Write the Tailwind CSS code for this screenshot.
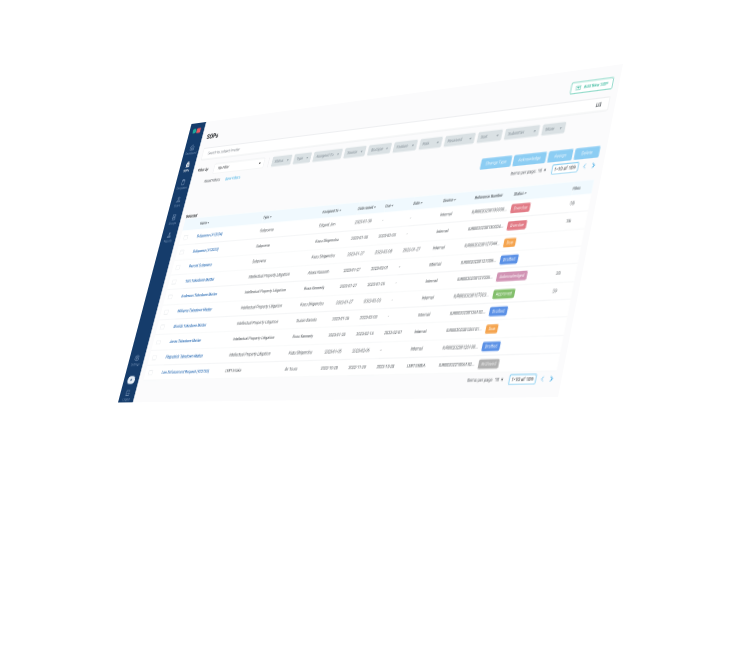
<!DOCTYPE html>
<html lang="en">
<head>
<meta charset="utf-8">
<title>SOPs</title>
<script src="https://cdn.jsdelivr.net/npm/@tailwindcss/browser@4"></script>
</head>
<body class="bg-white">
<div class="relative min-h-screen overflow-hidden font-[Roboto,'Liberation_Sans',sans-serif]">
  <!-- Board tilted in perspective; the inner layer holds the full-size interface -->
  <div class="absolute top-0 left-0 h-[273px] w-[504px] origin-top-left [transform:matrix3d(0.652957,-0.139921,0,-0.00032615,-0.288077,0.955861,0,-0.00015971,0,0,1,0,191.5,124,0,1)]">
  <div class="flex h-[780px] w-[1440px] origin-top-left scale-35 bg-[#fbfbfc] text-[11px] leading-4 text-[#40464b]">
    <nav class="flex w-[58px] shrink-0 flex-col items-center bg-[#153c6b] pt-[15px] pb-[3px] text-[9px] leading-[10px] text-[#7f9abd]">
      <svg class="mb-[30px] h-4 w-8" viewBox="0 0 32 16"><rect x="0" y="1" width="14" height="14" rx="6" fill="#1fa79b"/><rect x="16" y="0" width="15" height="15" rx="3" fill="#ea5a62"/></svg>
      <div class="flex flex-col gap-[18px]">
        <a href="#" class="flex flex-col items-center gap-0.5"><svg class="size-5" viewBox="0 0 24 24" fill="none" stroke="currentColor" stroke-width="2"><path d="M4 11l8-7 8 7v9H4zM9 20v-6h6v6"/></svg>Dashboard</a>
        <a href="#" class="flex flex-col items-center gap-0.5 font-bold text-white"><svg class="size-5" viewBox="0 0 24 24" fill="none" stroke="currentColor" stroke-width="3"><path d="M6 10h12v10H6zM9 10V4h6v6M9 15h6"/></svg>SOPs</a>
        <a href="#" class="flex flex-col items-center gap-0.5"><svg class="size-5" viewBox="0 0 24 24" fill="none" stroke="currentColor" stroke-width="2"><path d="M6 6h12v14H6zM9 6V3h6v3"/></svg>Templates</a>
        <a href="#" class="flex flex-col items-center gap-0.5"><svg class="size-5" viewBox="0 0 24 24" fill="none" stroke="currentColor" stroke-width="2"><circle cx="12" cy="8" r="4"/><path d="M4 20c1-8 15-8 16 0z"/></svg>Users</a>
        <a href="#" class="flex flex-col items-center gap-0.5"><svg class="size-5" viewBox="0 0 24 24" fill="none" stroke="currentColor" stroke-width="2"><path d="M6 4h12v6H6zM6 14h12v6H6zM12 10v4"/></svg>Groups</a>
        <a href="#" class="flex flex-col items-center gap-0.5"><svg class="size-5" viewBox="0 0 24 24" fill="none" stroke="currentColor" stroke-width="2"><circle cx="12" cy="8" r="3"/><path d="M5 19c2-7 12-7 14 0z"/></svg>Reports</a>
      </div>
      <div class="mt-auto flex flex-col items-center gap-[14px]">
        <a href="#" class="mb-3 flex flex-col items-center gap-0.5"><svg class="size-5" viewBox="0 0 24 24" fill="none" stroke="currentColor" stroke-width="2"><path d="M12 3l8 4v10l-8 4-8-4V7z"/><circle cx="12" cy="12" r="3"/></svg>Settings</a>
        <button aria-label="Account" class="h-[22px] w-7 rounded-full bg-[#e4ecf5] font-bold text-[#153c6b]">H</button>
        <a href="#" class="flex flex-col items-center gap-0.5"><svg class="size-5" viewBox="0 0 24 24" fill="none" stroke="currentColor" stroke-width="2"><path d="M18 8V4H5v16h13v-4M10 12h11"/></svg>Logout</a>
      </div>
    </nav>
    <main class="flex min-w-0 grow flex-col pr-[18px] pl-[19px]">
      <header class="mt-[30px] flex h-[30px] items-center justify-between">
        <h1 class="text-lg font-bold text-[#16191c]">SOPs</h1>
        <button class="flex h-[30px] items-center gap-2 rounded-sm border-2 border-[#6fcfb9] bg-white px-3 text-[11px] font-medium text-[#2bb596]"><svg class="h-3 w-4" viewBox="0 0 16 12" fill="none" stroke="currentColor" stroke-width="1.5"><path d="M1 1h14v10H1zM8 3v6M4 6h8"/></svg>Add New SOP</button>
      </header>
      <div class="mt-[18px] flex h-[34px] items-center gap-5 rounded-sm border border-[#dfe2e4] bg-white pr-5 pl-5">
        <input aria-label="Search" placeholder="Search by subject/matter" class="grow outline-none placeholder:text-[#777d83]">
        <button aria-label="Columns" class="text-[#3c4247]"><svg class="h-3 w-4" viewBox="0 0 16 12" fill="none" stroke="currentColor" stroke-width="1.5"><path d="M2 1v9h5V1M10 1h4v9h-4M10 5h4"/></svg></button>
      </div>
      <div class="mt-4 flex h-7 items-center">
        <label for="filter" class="w-[61px] font-medium text-[#16191c]">Filter by</label>
        <select id="filter" class="h-7 w-[190px] appearance-none rounded-sm border border-[#e2e5e7] bg-white bg-[linear-gradient(45deg,transparent_50%,#222_50%),linear-gradient(135deg,#222_50%,transparent_50%)] bg-[size:4px_4px] bg-[position:168px_11px,172px_11px] bg-no-repeat pl-4 text-[#16191c]"><option>No Filter</option></select>
        <div id="pills" class="ml-4 flex gap-[9px] border-l border-[#e4e6e8] pl-3"></div>
      </div>
      <div class="mt-3 flex gap-5 pl-9">
        <button>Reset Filters</button><button class="text-[#2ba6e0]">Save Filters</button>
      </div>
      <div class="mt-[14px] flex justify-end gap-1.5 text-white">
        <button class="h-7 w-[92px] rounded-sm bg-[#8ccdf3]">Change Type</button>
        <button class="h-7 w-[96px] rounded-sm bg-[#8ccdf3]">Acknowledge</button>
        <button class="h-7 w-[70px] rounded-sm bg-[#8ccdf3]">Assign</button>
        <button class="h-7 w-[70px] rounded-sm bg-[#8ccdf3]">Delete</button>
      </div>
      <div class="mt-1.5 flex h-6 items-center justify-end pr-1">
        <span class="w-20">Items per page:</span>
        <span class="w-10">10 &nbsp;▾</span>
        <span class="flex h-6 w-[76px] items-center justify-center rounded-sm border-2 border-[#6cc3ee] bg-white text-xs text-[#16191c]">1-10 of 109</span>
        <button aria-label="Previous" class="ml-3 w-6 text-[#8fcdf0]"><svg class="size-3" viewBox="0 0 12 12" fill="none" stroke="currentColor" stroke-width="2"><path d="M9 0L3 6l6 6"/></svg></button>
        <button aria-label="Next" class="text-[#1e9be0]"><svg class="size-3" viewBox="0 0 12 12" fill="none" stroke="currentColor" stroke-width="2"><path d="M3 0l6 6-6 6"/></svg></button>
      </div>
      <h2 class="mt-[11px] leading-3 font-bold text-[#16191c]">Selected</h2>
      <table class="w-full table-fixed border-collapse bg-white text-left">
        <colgroup><col class="w-[63px]"><col class="w-[236px]"><col class="w-[210px]"><col class="w-[121px]"><col class="w-[91px]"><col class="w-[90px]"><col class="w-[94px]"><col class="w-[98px]"><col class="w-[117px]"><col class="w-[170px]"><col></colgroup>
        <thead class="bg-[#f0f9fe] text-[10px]"><tr id="head" class="h-[33px]"></tr></thead>
        <tbody id="rows"></tbody>
      </table>
      <footer class="mt-1 flex h-6 items-center justify-end pr-1">
        <span class="w-20">Items per page</span>
        <span class="w-10">10 &nbsp;▾</span>
        <span class="flex h-6 w-[76px] items-center justify-center rounded-sm border-2 border-[#6cc3ee] bg-white text-xs text-[#16191c]">1-10 of 109</span>
        <button aria-label="Previous" class="ml-3 w-6 text-[#8fcdf0]"><svg class="size-3" viewBox="0 0 12 12" fill="none" stroke="currentColor" stroke-width="2"><path d="M9 0L3 6l6 6"/></svg></button>
        <button aria-label="Next" class="text-[#1e9be0]"><svg class="size-3" viewBox="0 0 12 12" fill="none" stroke="currentColor" stroke-width="2"><path d="M3 0l6 6-6 6"/></svg></button>
      </footer>
    </main>
  </div>
  </div>
</div>
<script>
const caret = '<svg class="inline size-1.5" viewBox="0 0 8 8" fill="none" stroke="currentColor" stroke-width="2"><path d="M1 2l3 4 3-4"/></svg>';
const pills = [['Status','w-[70px]'],['Type','w-[61px]'],['Assigned To','w-[99px]'],['Source','w-[72px]'],['Doctype','w-[76px]'],['Feature','w-[76px]'],['Risk','w-[71px]'],['Received','w-[94px]'],['Sort','w-[74px]'],['Submitter','w-[102px]'],['More','w-[67px]']];
document.getElementById('pills').innerHTML = pills.map(([t, w]) =>
  `<button class="${w} flex h-7 items-center justify-between rounded-sm bg-[#dae1e4] px-2.5 text-[#75818a]">${t}${caret}</button>`).join('');

const heads = ['', 'Name', 'Type', 'Assigned To', 'Date raised', 'Due', 'Date', 'Source', 'Reference Number', 'Status', 'Files'];
const plain = ['', 'Reference Number', 'Files'];
document.getElementById('head').innerHTML = heads.map(t =>
  `<th class="font-medium whitespace-nowrap">${t}${plain.includes(t) ? '' : ' ' + caret}</th>`).join('');

const tone = {Overdue:'bg-[#e27c87]', Due:'bg-[#f5a550]', Drafted:'bg-[#5b91e6]', Acknowledged:'bg-[#d194b4]', Approved:'bg-[#83bf6c]', Archived:'bg-[#b0b0b0]'};
const ip = 'Intellectual Property Litigation';
const rows = [
 ['Subpoena (#12034)','Subpoena','Edgard Jim','2023-01-30','-','-','Internal','IUR0020230130030...','Overdue','38'],
 ['Subpoena (#12033)','Subpoena','Kazu Shigenobu','2023-01-30','2023-02-03','-','Internal','IUR0020230130024...','Overdue','36'],
 ['Record Subpoena','Subpoena','Kazu Shigenobu','2023-01-27','2023-02-08','2023-01-27','Internal','IUR0020230127044...','Due',''],
 ['Tom Takedown Matter',ip,'Alexis Russom','2023-01-27','2023-02-01','-','Internal','IUR0020230127036...','Drafted',''],
 ['Anderson Takedown Matter',ip,'Ross Kennedy','2023-01-27','2023-01-25','-','Internal','IUR0020230127035...','Acknowledged','20'],
 ['Williams Takedown Matter',ip,'Kazu Shigenobu','2023-01-27','2023-02-03','-','Internal','IUR0020230127023...','Approved','39'],
 ['Shields Takedown Matter',ip,'Susan Daniels','2023-01-26','2023-02-03','-','Internal','IUR0020230126102...','Drafted',''],
 ['Jones Takedown Matter',ip,'Ross Kennedy','2023-01-20','2023-02-14','2023-02-07','Internal','IUR0020230126101...','Due',''],
 ['Fitzpatrick Takedown Matter',ip,'Kazu Shigenobu','2023-01-05','2023-02-06','-','Internal','IUR0020230126100...','Drafted',''],
 ['Law Enforcement Request (#22730)','LERT Intake','de Tours','2022-10-28','2022-11-29','2022-10-28','LERT EMEA','IUR0020221006192...','Archived','']];
document.getElementById('rows').innerHTML = rows.map(r =>
  `<tr class="h-[41px] border-b border-[#eceeef]"><td class="pl-3"><input type="checkbox" aria-label="Select ${r[0]}" class="block h-3 w-4 appearance-none rounded-xs border border-[#dfe3e6] bg-white"></td>` +
  `<td><a href="#" class="font-medium text-[#2468b2]">${r[0]}</a></td>` +
  r.slice(1, 8).map(t => `<td class="whitespace-nowrap">${t}</td>`).join('') +
  `<td><span class="${tone[r[8]]} inline-block rounded-sm px-2 py-0.5 leading-[18px] text-white">${r[8]}</span></td><td>${r[9]}</td></tr>`).join('');
</script>
</body>
</html>
